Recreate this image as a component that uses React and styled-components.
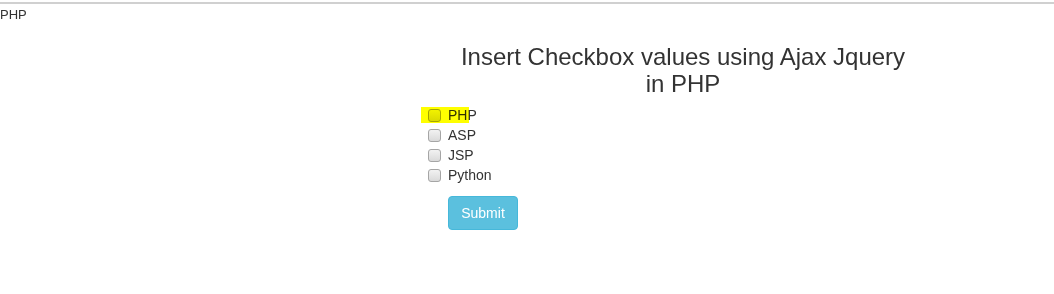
import React from "react";
import styled, { createGlobalStyle } from "styled-components";

const Global = createGlobalStyle`
  html, body { margin: 0; padding: 0; background: #fff; }
  body { font-family: "Liberation Sans", Arial, sans-serif; color: #333; }
`;

const Page = styled.div`
  border-top: 2px solid #d0d0d0;
  margin-top: 2px;
`;

const TopLabel = styled.div`
  font-size: 13px;
  line-height: 18px;
  padding-top: 2px;
  color: #333;
`;

const Main = styled.div`
  display: flex;
  flex-direction: column;
  padding-left: 428px;
  padding-top: 20px;
`;

const Title = styled.h3`
  margin: 0 0 8px 30px;
  width: 450px;
  font-size: 24px;
  font-weight: 400;
  line-height: 26.5px;
  text-align: center;
  color: #333;
`;

const List = styled.div`
  display: flex;
  flex-direction: column;
  position: relative;
`;

const Row = styled.label`
  display: flex;
  align-items: center;
  gap: 7px;
  height: 20px;
  font-size: 14px;
  color: #333;
`;

const Box = styled.span`
  box-sizing: border-box;
  width: 13px;
  height: 13px;
  border: 1px solid #a5a5a5;
  border-radius: 3px;
  background: linear-gradient(#f2f2f2, #dadada);
`;

const Highlight = styled.span`
  position: absolute;
  left: -7px;
  top: 2px;
  width: 48px;
  height: 16px;
  background: #ffff00;
  mix-blend-mode: multiply;
  pointer-events: none;
`;

const Button = styled.button`
  margin: 11px 0 0 20px;
  width: 70px;
  height: 34px;
  box-sizing: border-box;
  background: #5bc0de;
  border: 1px solid #46b8da;
  border-radius: 4px;
  color: #fff;
  font-family: "Liberation Sans", Arial, sans-serif;
  font-size: 14px;
  padding: 0;
`;

const items = ["PHP", "ASP", "JSP", "Python"];

export default function App() {
  return (
    <>
      <Global />
      <Page>
        <TopLabel>PHP</TopLabel>
        <Main>
          <Title>Insert Checkbox values using Ajax Jquery in PHP</Title>
          <List>
            {items.map((t) => (
              <Row key={t}>
                <Box />
                {t}
              </Row>
            ))}
            <Highlight />
          </List>
          <div>
            <Button>Submit</Button>
          </div>
        </Main>
      </Page>
    </>
  );
}
